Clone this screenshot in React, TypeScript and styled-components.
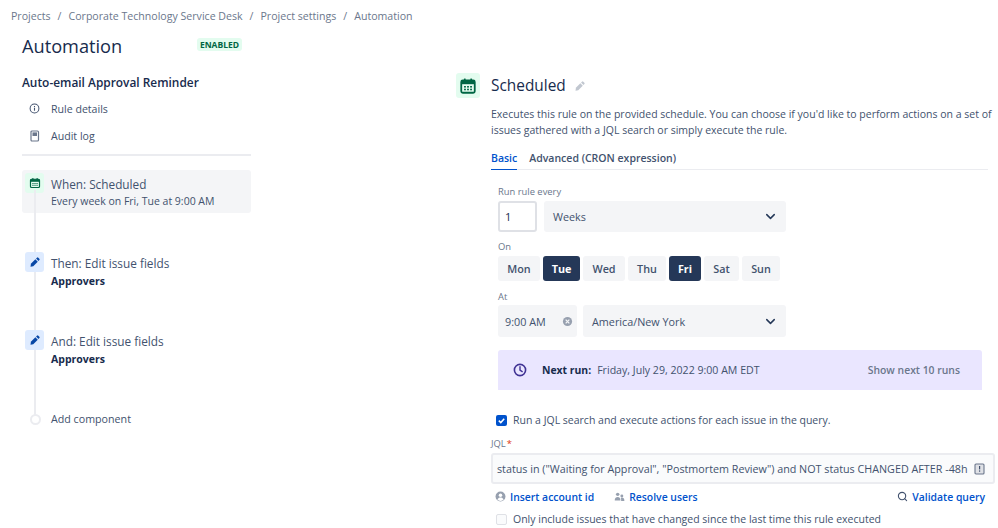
import React from 'react';
import styled, { createGlobalStyle } from 'styled-components';
import { ChevronDown, Search } from 'lucide-react';

const GlobalStyle = createGlobalStyle`
  html, body {
    margin: 0;
    padding: 0;
    background: #fff;
    overflow: hidden;
  }
  body {
    font-family: "Open Sans", "Noto Sans", sans-serif;
    font-size: 12px;
    color: #42526e;
  }
`;

const Page = styled.div`
  width: 998px;
  height: 528px;
  overflow: hidden;
`;

const Breadcrumbs = styled.nav`
  display: flex;
  align-items: center;
  height: 16px;
  padding: 8px 0 0 11px;
  font-size: 10.6px;
  color: #6b778c;
`;

const Slash = styled.span`
  margin: 0 7px;
`;

const Columns = styled.div`
  display: flex;
  padding-left: 22px;
`;

const Sidebar = styled.aside`
  width: 229px;
  flex: none;
`;

const HeadingRow = styled.div`
  display: flex;
  align-items: center;
  justify-content: space-between;
  height: 30px;
  margin-top: 7px;
  width: 220px;
`;

const PageTitle = styled.h1`
  margin: 0;
  font-size: 18.2px;
  font-weight: 500;
  color: #172b4d;
`;

const Lozenge = styled.span`
  padding: 1px 3px;
  margin-bottom: 4px;
  border-radius: 3px;
  background: #e3fcef;
  color: #006644;
  font-size: 8.5px;
  font-weight: 700;
`;

const RuleName = styled.h2`
  margin: 13px 0 0;
  font-size: 11.9px;
  line-height: 16px;
  font-weight: 600;
  color: #172b4d;
`;

const NavItem = styled.div`
  display: flex;
  align-items: center;
  gap: 11px;
  height: 27px;
  padding-left: 7px;
  font-size: 10.6px;
  color: #42526e;
`;

const NavList = styled.div`
  margin-top: 5px;
`;

const Divider = styled.hr`
  margin: 5px 0 14px;
  border: 0;
  height: 2px;
  background: #ebecf0;
`;

const Tree = styled.div`
  position: relative;
`;

const TreeLine = styled.div`
  position: absolute;
  left: 12px;
  top: 20px;
  height: 229px;
  width: 2px;
  background: #ebecf0;
`;

const Step = styled.div<{ $active?: boolean; $height: number; $top?: number }>`
  position: relative;
  display: flex;
  gap: 7px;
  height: ${(p) => p.$height}px;
  margin-top: ${(p) => p.$top ?? 0}px;
  padding: 3px 0 0 3px;
  box-sizing: border-box;
  border-radius: 3px;
  background: ${(p) => (p.$active ? '#f4f5f7' : 'transparent')};
`;

const StepIcon = styled.div<{ $bg: string }>`
  width: 19px;
  height: 20px;
  flex: none;
  display: flex;
  align-items: center;
  justify-content: center;
  border-radius: 3px;
  background: ${(p) => p.$bg};
`;

const StepTitle = styled.div`
  margin-top: 3px;
  font-size: 11.8px;
  line-height: 16px;
  color: #42526e;
`;

const StepText = styled.div<{ $bold?: boolean }>`
  margin-top: ${(p) => (p.$bold ? 3 : 2)}px;
  font-size: 10.5px;
  line-height: 15px;
  font-weight: ${(p) => (p.$bold ? 700 : 400)};
  color: ${(p) => (p.$bold ? '#172b4d' : '#42526e')};
`;

const AddDot = styled.div`
  width: 7px;
  height: 7px;
  margin: 2px 0 0 5px;
  border: 2px solid #ebecf0;
  border-radius: 50%;
  background: #fff;
  flex: none;
`;

const AddRow = styled.div`
  position: relative;
  display: flex;
  align-items: flex-start;
  gap: 10px;
  padding-left: 3px;
  font-size: 10.7px;
  line-height: 15px;
`;

const Panel = styled.main`
  width: 540px;
  margin-left: 205px;
  margin-top: 49px;
  display: flex;
  gap: 11px;
  flex: none;
`;

const PanelIcon = styled.div`
  width: 24px;
  height: 25px;
  flex: none;
  display: flex;
  align-items: center;
  justify-content: center;
  border-radius: 3px;
  background: #e3fcef;
`;

const PanelBody = styled.div`
  width: 504px;
`;

const TitleRow = styled.div`
  display: flex;
  align-items: center;
  gap: 8px;
  height: 25px;
`;

const PanelTitle = styled.h2`
  margin: 0;
  font-size: 15.4px;
  font-weight: 500;
  color: #172b4d;
`;

const Description = styled.p`
  width: 504px;
  margin: 8px 0 0;
  font-size: 10.5px;
  line-height: 16px;
  color: #42526e;
  white-space: nowrap;
`;

const Tabs = styled.div`
  display: flex;
  gap: 12px;
  width: 497px;
  height: 19px;
  margin-top: 12px;
  border-bottom: 1px solid #ebecf0;
`;

const Tab = styled.div<{ $active?: boolean }>`
  height: 19px;
  box-sizing: content-box;
  font-size: 10.5px;
  line-height: 16px;
  font-weight: 600;
  color: ${(p) => (p.$active ? '#0052cc' : '#42526e')};
  border-bottom: ${(p) => (p.$active ? '1px solid #0052cc' : '0')};
`;

const Form = styled.div`
  padding-left: 7px;
  width: 484px;
`;

const Label = styled.div<{ $top: number }>`
  margin-top: ${(p) => p.$top}px;
  font-size: 9.4px;
  line-height: 13px;
  color: #6b778c;
`;

const FieldRow = styled.div<{ $top: number }>`
  display: flex;
  gap: 7px;
  margin-top: ${(p) => p.$top}px;
`;

const TimeRow = styled(FieldRow)`
  gap: 6px;
`;

const NumberBox = styled.div`
  width: 39px;
  height: 31px;
  box-sizing: border-box;
  padding-left: 5px;
  display: flex;
  align-items: center;
  border: 2px solid #dfe1e6;
  border-radius: 3px;
  background: #fff;
  color: #172b4d;
  font-size: 11px;
`;

const Select = styled.div<{ $width: number; $height: number }>`
  width: ${(p) => p.$width}px;
  height: ${(p) => p.$height}px;
  box-sizing: border-box;
  padding: 0 8px 0 9px;
  display: flex;
  align-items: center;
  justify-content: space-between;
  border-radius: 3px;
  background: #f4f5f7;
  color: #42526e;
  font-size: 10.8px;
`;

const DayRow = styled.div`
  display: flex;
  gap: 3px;
  margin-top: 3px;
`;

const Day = styled.div<{ $width: number; $on?: boolean }>`
  width: ${(p) => p.$width}px;
  height: 25px;
  display: flex;
  align-items: center;
  justify-content: center;
  border-radius: 3px;
  font-size: 10.8px;
  font-weight: ${(p) => (p.$on ? 700 : 600)};
  background: ${(p) => (p.$on ? '#253858' : '#f4f5f7')};
  color: ${(p) => (p.$on ? '#fff' : '#42526e')};
`;

const TimeBox = styled.div`
  width: 79px;
  height: 32px;
  box-sizing: border-box;
  padding: 0 4px 0 7px;
  display: flex;
  align-items: center;
  justify-content: space-between;
  border-radius: 3px;
  background: #f4f5f7;
  color: #42526e;
  font-size: 10.8px;
`;

const Banner = styled.div`
  display: flex;
  align-items: center;
  height: 40px;
  margin-top: 13px;
  padding: 0 22px 0 15px;
  border-radius: 3px 3px 0 0;
  background: #eae6ff;
  font-size: 10.6px;
  color: #42526e;
`;

const BannerStrong = styled.strong`
  margin: 0 6px 0 15px;
  color: #172b4d;
  font-weight: 700;
  font-size: 10.4px;
`;

const BannerLink = styled.span`
  margin-left: auto;
  color: #6b778c;
  font-weight: 600;
  font-size: 10.4px;
`;

const CheckRow = styled.div<{ $top: number }>`
  display: flex;
  align-items: center;
  gap: 6px;
  margin: ${(p) => p.$top}px 0 0 5px;
  font-size: 10.5px;
  line-height: 14px;
  white-space: nowrap;
`;

const Check = styled.div<{ $on?: boolean }>`
  width: 11px;
  height: 11px;
  flex: none;
  display: flex;
  align-items: center;
  justify-content: center;
  border-radius: 2px;
  box-sizing: border-box;
  background: ${(p) => (p.$on ? '#0052cc' : '#fafbfc')};
  border: ${(p) => (p.$on ? '0' : '1.5px solid #dfe1e6')};
`;

const JqlLabel = styled.div`
  margin-top: 10px;
  font-size: 9.4px;
  line-height: 13px;
  color: #6b778c;
`;

const Required = styled.span`
  color: #de350b;
  margin-left: 1px;
`;

const JqlInput = styled.div`
  width: 504px;
  height: 31px;
  margin-top: 3px;
  box-sizing: border-box;
  padding: 0 8px 0 4px;
  display: flex;
  align-items: center;
  justify-content: space-between;
  border: 2px solid #ebecf0;
  border-radius: 3px;
  background: #fafbfc;
  color: #42526e;
  font-size: 10.75px;
  white-space: nowrap;
`;

const LinkRow = styled.div`
  display: flex;
  width: 490px;
  margin: 5px 0 0 4px;
  height: 15px;
  align-items: center;
`;

const ActionLink = styled.span<{ $push?: boolean; $gap?: number }>`
  display: flex;
  align-items: center;
  gap: 4px;
  margin-left: ${(p) => (p.$push ? 'auto' : `${p.$gap ?? 0}px`)};
  font-size: 10.4px;
  font-weight: 600;
  color: #0052cc;
`;

const CalendarIcon = ({ size, color }: { size: number; color: string }) => (
  <svg width={size} height={size} viewBox="0 0 16 16" fill="none">
    <rect x="2" y="3" width="12" height="11" rx="1.4" stroke={color} strokeWidth="1.6" />
    <rect x="2" y="3" width="12" height="3.4" fill={color} />
    <rect x="4.4" y="1.4" width="1.5" height="3" fill={color} />
    <rect x="10.1" y="1.4" width="1.5" height="3" fill={color} />
    <g fill={color}>
      <rect x="4.5" y="8" width="1.6" height="1.4" />
      <rect x="7.2" y="8" width="1.6" height="1.4" />
      <rect x="9.9" y="8" width="1.6" height="1.4" />
      <rect x="4.5" y="10.4" width="1.6" height="1.4" />
      <rect x="7.2" y="10.4" width="1.6" height="1.4" />
      <rect x="9.9" y="10.4" width="1.6" height="1.4" />
    </g>
  </svg>
);

const PencilIcon = ({ size, color }: { size: number; color: string }) => (
  <svg width={size} height={size} viewBox="0 0 16 16" fill={color}>
    <path d="M10.6 2.2a1.3 1.3 0 0 1 1.8 0l1.4 1.4a1.3 1.3 0 0 1 0 1.8L12.6 6.6 9.4 3.4z" />
    <path d="M8.5 4.3l3.2 3.2-6 6-3.7.9.5-4.1z" />
  </svg>
);

const InfoIcon = () => (
  <svg width="11" height="11" viewBox="0 0 12 12" fill="none">
    <circle cx="6" cy="6" r="4.8" stroke="#42526e" strokeWidth="1.1" />
    <rect x="5.4" y="5.2" width="1.2" height="3.2" fill="#42526e" />
    <rect x="5.4" y="3.3" width="1.2" height="1.2" fill="#42526e" />
  </svg>
);

const PageIcon = () => (
  <svg width="11" height="12" viewBox="0 0 11 12" fill="none">
    <rect x="2" y="1" width="7.5" height="10" rx="1" fill="#fff" stroke="#6b778c" strokeWidth="1.2" />
    <rect x="3.5" y="2.4" width="4.5" height="3.6" fill="#6b778c" />
  </svg>
);

const ClockIcon = () => (
  <svg width="14" height="14" viewBox="0 0 14 14" fill="none">
    <circle cx="7" cy="7" r="5.6" stroke="#403294" strokeWidth="1.6" />
    <path d="M7 3.8V7.2L9.2 8.6" stroke="#403294" strokeWidth="1.4" strokeLinecap="round" />
  </svg>
);

const ClearIcon = () => (
  <svg width="11" height="11" viewBox="0 0 12 12">
    <circle cx="6" cy="6" r="5" fill="#97a0af" />
    <path d="M4 4l4 4M8 4l-4 4" stroke="#f4f5f7" strokeWidth="1.4" />
  </svg>
);

const SyntaxIcon = () => (
  <svg width="11" height="12" viewBox="0 0 11 12" fill="none">
    <rect x="1" y="1" width="9" height="10" rx="1" fill="#dfe1e6" stroke="#6b778c" strokeWidth="1.1" />
    <rect x="5" y="3" width="1.2" height="3.4" fill="#42526e" />
    <rect x="5" y="7.4" width="1.2" height="1.3" fill="#42526e" />
  </svg>
);

const UserIcon = () => (
  <svg width="11" height="11" viewBox="0 0 12 12">
    <circle cx="6" cy="6" r="5.4" fill="#97a0af" />
    <circle cx="6" cy="4.6" r="1.9" fill="#fff" />
    <path d="M2.6 9.4c.6-1.7 2-2.4 3.4-2.4s2.8.7 3.4 2.4A5 5 0 0 1 6 11a5 5 0 0 1-3.4-1.6z" fill="#fff" />
  </svg>
);

const PeopleIcon = () => (
  <svg width="11" height="10" viewBox="0 0 12 11" fill="#97a0af">
    <circle cx="4" cy="2.6" r="1.9" />
    <circle cx="8.6" cy="4.4" r="1.6" />
    <path d="M.8 8.6C.8 6.6 2.2 5.4 4 5.4s3 1.2 3 3.2v.8H.8z" />
    <path d="M7.8 10V8.2c0-.7-.2-1.2-.5-1.6.4-.3.9-.5 1.4-.5 1.5 0 2.6 1 2.6 2.6V10z" />
  </svg>
);

const days = [
  { name: 'Mon', width: 42 },
  { name: 'Tue', width: 37, on: true },
  { name: 'Wed', width: 42 },
  { name: 'Thu', width: 38 },
  { name: 'Fri', width: 32, on: true },
  { name: 'Sat', width: 35 },
  { name: 'Sun', width: 38 },
];

const crumbs = ['Projects', 'Corporate Technology Service Desk', 'Project settings', 'Automation'];

export default function App() {
  return (
    <Page>
      <GlobalStyle />
      <Breadcrumbs>
        {crumbs.map((c, i) => (
          <React.Fragment key={c}>
            {i > 0 && <Slash>/</Slash>}
            <span>{c}</span>
          </React.Fragment>
        ))}
      </Breadcrumbs>
      <Columns>
        <Sidebar>
          <HeadingRow>
            <PageTitle>Automation</PageTitle>
            <Lozenge>ENABLED</Lozenge>
          </HeadingRow>
          <RuleName>Auto-email Approval Reminder</RuleName>
          <NavList>
            <NavItem>
              <InfoIcon />
              Rule details
            </NavItem>
            <NavItem>
              <PageIcon />
              Audit log
            </NavItem>
          </NavList>
          <Divider />
          <Tree>
            <Step $active $height={43}>
              <StepIcon $bg="#e3fcef">
                <CalendarIcon size={12} color="#006644" />
              </StepIcon>
              <div>
                <StepTitle>When: Scheduled</StepTitle>
                <StepText>Every week on Fri, Tue at 9:00 AM</StepText>
              </div>
            </Step>
            <TreeLine />
            <Step $height={78} $top={36}>
              <StepIcon $bg="#deebff">
                <PencilIcon size={12} color="#0747a6" />
              </StepIcon>
              <div>
                <StepTitle>Then: Edit issue fields</StepTitle>
                <StepText $bold>Approvers</StepText>
              </div>
            </Step>
            <Step $height={85}>
              <StepIcon $bg="#deebff">
                <PencilIcon size={12} color="#0747a6" />
              </StepIcon>
              <div>
                <StepTitle>And: Edit issue fields</StepTitle>
                <StepText $bold>Approvers</StepText>
              </div>
            </Step>
            <AddRow>
              <AddDot />
              Add component
            </AddRow>
          </Tree>
        </Sidebar>
        <Panel>
          <PanelIcon>
            <CalendarIcon size={18} color="#006644" />
          </PanelIcon>
          <PanelBody>
            <TitleRow>
              <PanelTitle>Scheduled</PanelTitle>
              <PencilIcon size={12} color="#c1c7d0" />
            </TitleRow>
            <Description>
              Executes this rule on the provided schedule. You can choose if you'd like to perform actions on a set of
              <br />
              issues gathered with a JQL search or simply execute the rule.
            </Description>
            <Tabs>
              <Tab $active>Basic</Tab>
              <Tab>Advanced (CRON expression)</Tab>
            </Tabs>
            <Form>
              <Label $top={15}>Run rule every</Label>
              <FieldRow $top={3}>
                <NumberBox>1</NumberBox>
                <Select $width={242} $height={31}>
                  Weeks
                  <ChevronDown size={15} color="#253858" strokeWidth={2.4} />
                </Select>
              </FieldRow>
              <Label $top={8}>On</Label>
              <DayRow>
                {days.map((d) => (
                  <Day key={d.name} $width={d.width} $on={d.on}>
                    {d.name}
                  </Day>
                ))}
              </DayRow>
              <Label $top={9}>At</Label>
              <TimeRow $top={2}>
                <TimeBox>
                  9:00 AM
                  <ClearIcon />
                </TimeBox>
                <Select $width={203} $height={32}>
                  America/New York
                  <ChevronDown size={15} color="#253858" strokeWidth={2.4} />
                </Select>
              </TimeRow>
              <Banner>
                <ClockIcon />
                <BannerStrong>Next run:</BannerStrong>
                Friday, July 29, 2022 9:00 AM EDT
                <BannerLink>Show next 10 runs</BannerLink>
              </Banner>
            </Form>
            <CheckRow $top={23}>
              <Check $on>
                <svg width="9" height="9" viewBox="0 0 9 9" fill="none">
                  <path d="M1.8 4.6l2 2 3.4-3.8" stroke="#fff" strokeWidth="1.5" />
                </svg>
              </Check>
              Run a JQL search and execute actions for each issue in the query.
            </CheckRow>
            <JqlLabel>
              JQL<Required>*</Required>
            </JqlLabel>
            <JqlInput>
              status in ("Waiting for Approval", "Postmortem Review") and NOT status CHANGED AFTER -48h
              <SyntaxIcon />
            </JqlInput>
            <LinkRow>
              <ActionLink>
                <UserIcon />
                Insert account id
              </ActionLink>
              <ActionLink $gap={20}>
                <PeopleIcon />
                Resolve users
              </ActionLink>
              <ActionLink $push>
                <Search size={11} color="#42526e" strokeWidth={2.4} />
                Validate query
              </ActionLink>
            </LinkRow>
            <CheckRow $top={8}>
              <Check />
              Only include issues that have changed since the last time this rule executed
            </CheckRow>
          </PanelBody>
        </Panel>
      </Columns>
    </Page>
  );
}
